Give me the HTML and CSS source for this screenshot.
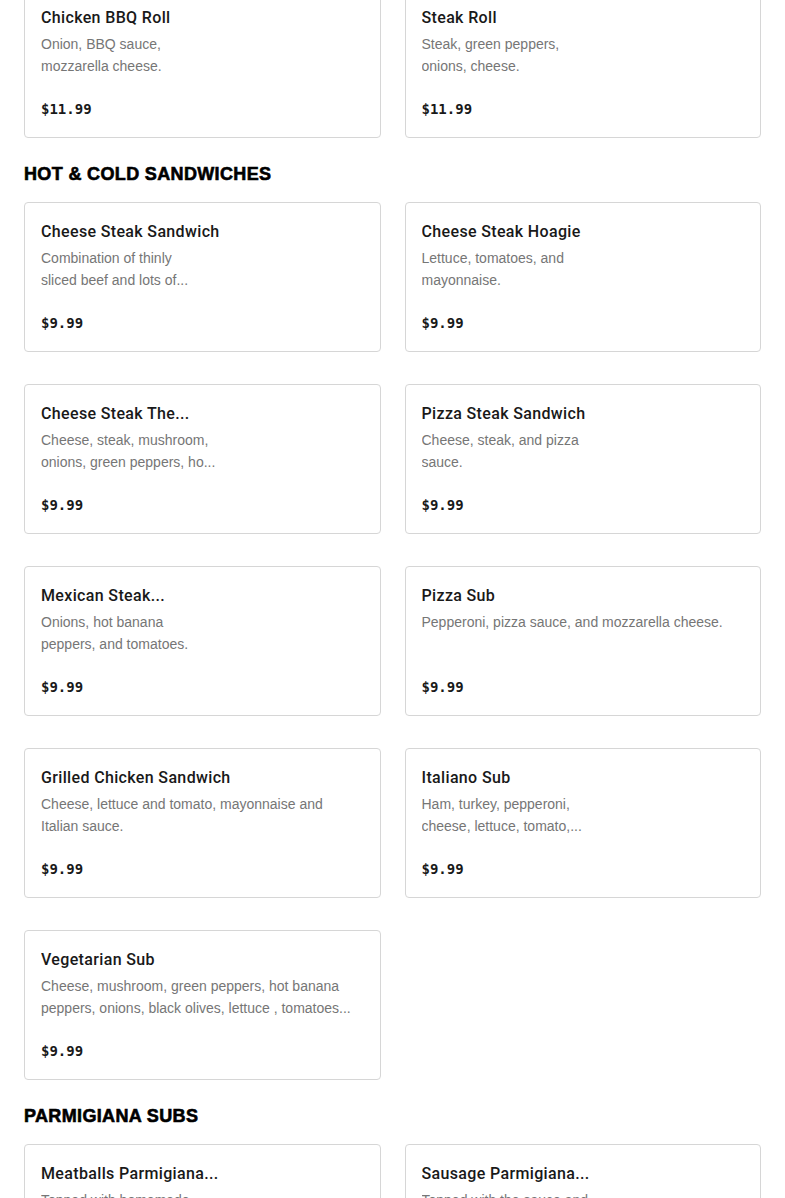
FILE: index.html
```html
<!DOCTYPE html>
<html lang="en">
<head>
<meta charset="utf-8">
<title>Menu</title>
<link rel="stylesheet" href="styles.css">
</head>
<body>
<main class="menu">
  <section class="section first">
    <div class="grid">
      <article class="card narrow">
        <h3 class="title">Chicken BBQ Roll</h3>
        <p class="desc">Onion, BBQ sauce, mozzarella cheese.</p>
        <div class="price">$11.99</div>
      </article>
      <article class="card narrow">
        <h3 class="title">Steak Roll</h3>
        <p class="desc">Steak, green peppers, onions, cheese.</p>
        <div class="price">$11.99</div>
      </article>
    </div>
  </section>

  <section class="section">
    <h2 class="heading">HOT &amp; COLD SANDWICHES</h2>
    <div class="grid">
      <article class="card narrow">
        <h3 class="title">Cheese Steak Sandwich</h3>
        <p class="desc">Combination of thinly sliced&nbsp;beef and lots of...</p>
        <div class="price">$9.99</div>
      </article>
      <article class="card narrow">
        <h3 class="title">Cheese Steak Hoagie</h3>
        <p class="desc">Lettuce, tomatoes, and mayonnaise.</p>
        <div class="price">$9.99</div>
      </article>
      <article class="card narrow">
        <h3 class="title">Cheese Steak The...</h3>
        <p class="desc">Cheese, steak, mushroom, onions, green peppers, ho...</p>
        <div class="price">$9.99</div>
      </article>
      <article class="card narrow">
        <h3 class="title">Pizza Steak Sandwich</h3>
        <p class="desc">Cheese, steak, and pizza sauce.</p>
        <div class="price">$9.99</div>
      </article>
      <article class="card narrow">
        <h3 class="title">Mexican Steak...</h3>
        <p class="desc">Onions, hot banana peppers, and tomatoes.</p>
        <div class="price">$9.99</div>
      </article>
      <article class="card">
        <h3 class="title">Pizza Sub</h3>
        <p class="desc">Pepperoni, pizza sauce, and mozzarella cheese.</p>
        <div class="price">$9.99</div>
      </article>
      <article class="card">
        <h3 class="title">Grilled Chicken Sandwich</h3>
        <p class="desc">Cheese, lettuce and tomato, mayonnaise and Italian sauce.</p>
        <div class="price">$9.99</div>
      </article>
      <article class="card narrow">
        <h3 class="title">Italiano Sub</h3>
        <p class="desc">Ham, turkey, pepperoni, cheese, lettuce, tomato,...</p>
        <div class="price">$9.99</div>
      </article>
      <article class="card">
        <h3 class="title">Vegetarian Sub</h3>
        <p class="desc">Cheese, mushroom, green peppers, hot banana peppers, onions, black olives, lettuce , tomatoes...</p>
        <div class="price">$9.99</div>
      </article>
    </div>
  </section>

  <section class="section">
    <h2 class="heading">PARMIGIANA SUBS</h2>
    <div class="grid">
      <article class="card narrow">
        <h3 class="title">Meatballs Parmigiana...</h3>
        <p class="desc">Topped with homemade sauce and mozzarella cheese.</p>
        <div class="price">$10.99</div>
      </article>
      <article class="card narrow">
        <h3 class="title">Sausage Parmigiana...</h3>
        <p class="desc">Topped with the sauce and mozzarella cheese.</p>
        <div class="price">$10.99</div>
      </article>
    </div>
  </section>
</main>
</body>
</html>
```
FILE: styles.css
```css
html, body {
  margin: 0;
  padding: 0;
  background: #ffffff;
}

body {
  font-family: "Liberation Sans", Arial, sans-serif;
  color: #191919;
  overflow: hidden;
}

.menu {
  padding: 0 24px;
  display: flex;
  flex-direction: column;
}

.section.first {
  margin-top: -12px;
}

.heading {
  margin: 22px 0 14px;
  font-family: "Liberation Sans", Arial, sans-serif;
  font-weight: 700;
  font-size: 18px;
  line-height: 28px;
  color: #000000;
  letter-spacing: 0.35px;
  -webkit-text-stroke: 0.6px #000000;
}

.grid {
  display: grid;
  grid-template-columns: 1fr 1fr;
  column-gap: 24px;
  row-gap: 32px;
}

.card {
  border: 1px solid #d6d6d6;
  border-radius: 4px;
  padding: 16px;
  height: 150px;
  box-sizing: border-box;
  display: flex;
  flex-direction: column;
}

.title {
  margin: 0;
  font-family: Roboto, "Liberation Sans", sans-serif;
  font-size: 16px;
  font-weight: 500;
  line-height: 24px;
  letter-spacing: 0.35px;
  color: #191919;
  white-space: nowrap;
  overflow: hidden;
  padding-top: 1px;
  box-sizing: border-box;
}

.desc {
  margin: 3px 0 0;
  font-size: 14px;
  line-height: 22px;
  color: #767676;
  height: 44px;
  overflow: hidden;
}

.narrow .title {
  max-width: 190px;
}

.narrow .desc {
  max-width: 176px;
}

.price {
  margin-top: 21px;
  font-family: "DejaVu Sans Mono", monospace;
  font-weight: 700;
  font-size: 14px;
  line-height: 22px;
  color: #191919;
}
```
